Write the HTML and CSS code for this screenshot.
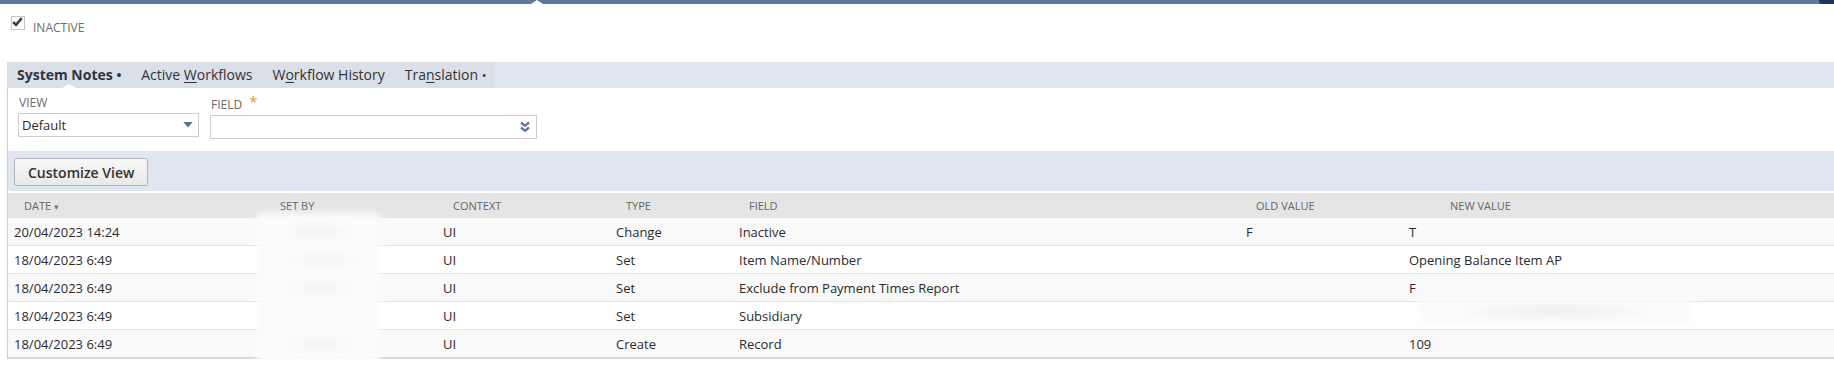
FILE: index.html
```html
<!DOCTYPE html>
<html lang="en">
<head>
  <meta charset="UTF-8">
  <title>Item - System Notes</title>
  <link rel="stylesheet" href="styles.css">
</head>
<body>

  <div class="topbar">
    <span class="notch"></span>
    <span class="corner"></span>
  </div>

  <div class="inactive-field">
    <span class="checkbox">
      <svg viewBox="0 0 14 14" width="14" height="14"><path d="M2.3 7 L5.4 10.1 L11.6 2.8" stroke="#3f3f3f" stroke-width="2.7" fill="none"/></svg>
    </span>
    <span class="check-label">INACTIVE</span>
  </div>

  <div class="subtabs">
    <div class="tabbar">
      <ul class="tabs">
        <li class="active">System Notes <span class="dot">•</span></li>
        <li>Active <u>W</u>orkflows</li>
        <li>W<u>o</u>rkflow History</li>
        <li>Tra<u>n</u>slation <span class="dot">•</span></li>
      </ul>
    </div>

    <div class="panel">
      <div class="filters">
        <div class="filter">
          <label>VIEW</label>
          <div class="select view-select">
            <span>Default</span>
            <svg viewBox="0 0 11 7" width="11" height="7"><path d="M0 0 H11 L5.5 6.5 Z" fill="#5b7196"/></svg>
          </div>
        </div>
        <div class="filter">
          <label>FIELD <span class="req">*</span></label>
          <div class="select field-select">
            <span></span>
            <svg viewBox="0 0 12 12" width="12" height="12"><path d="M2 1.5 L6 4.8 L10 1.5 M2 6.5 L6 9.8 L10 6.5" stroke="#5f7599" stroke-width="2.3" fill="none"/></svg>
          </div>
        </div>
      </div>

      <div class="toolbar">
        <button class="btn">Customize View</button>
      </div>

      <table class="notes">
        <colgroup>
          <col style="width:256px">
          <col style="width:173px">
          <col style="width:173px">
          <col style="width:123px">
          <col style="width:507px">
          <col style="width:163px">
          <col>
        </colgroup>
        <thead>
          <tr>
            <th>DATE <span class="sort">▾</span></th>
            <th>SET BY</th>
            <th>CONTEXT</th>
            <th>TYPE</th>
            <th>FIELD</th>
            <th>OLD VALUE</th>
            <th class="new-head">NEW VALUE</th>
          </tr>
        </thead>
        <tbody>
          <tr>
            <td>20/04/2023 14:24</td><td></td><td>UI</td><td>Change</td><td>Inactive</td><td>F</td><td>T</td>
          </tr>
          <tr>
            <td>18/04/2023 6:49</td><td></td><td>UI</td><td>Set</td><td>Item Name/Number</td><td></td><td>Opening Balance Item AP</td>
          </tr>
          <tr>
            <td>18/04/2023 6:49</td><td></td><td>UI</td><td>Set</td><td>Exclude from Payment Times Report</td><td></td><td>F</td>
          </tr>
          <tr>
            <td>18/04/2023 6:49</td><td></td><td>UI</td><td>Set</td><td>Subsidiary</td><td></td><td></td>
          </tr>
          <tr>
            <td>18/04/2023 6:49</td><td></td><td>UI</td><td>Create</td><td>Record</td><td></td><td>109</td>
          </tr>
        </tbody>
      </table>

      <div class="blur blur-setby"></div>
      <div class="blur blur-value"></div>
    </div>
  </div>

</body>
</html>
```

FILE: styles.css
```css
body {
  margin: 0;
  font-family: "Open Sans", Arial, sans-serif;
  color: #2b2b2b;
  background-color: #fff;
  overflow: hidden;
}

.topbar {
  position: relative;
  height: 4px;
  background-color: #607799;
}

.notch {
  position: absolute;
  left: 531px;
  bottom: 0;
  width: 0;
  height: 0;
  border-left: 6px solid transparent;
  border-right: 6px solid transparent;
  border-bottom: 4px solid #fff;
}

.corner {
  position: absolute;
  right: 0;
  top: 0;
  width: 15px;
  height: 4px;
  background-color: #22365a;
  border-bottom-left-radius: 3px;
}

.inactive-field {
  display: flex;
  align-items: flex-start;
  gap: 8px;
  padding: 10px 0 0 11px;
}

.checkbox {
  display: flex;
  width: 14px;
  height: 14px;
  margin-top: 2px;
  border: 1px solid #c4c4c4;
  box-sizing: border-box;
  overflow: visible;
}

.checkbox svg {
  margin: -2px 0 0 -1px;
}

.check-label {
  font-size: 12px;
  color: #6b6b6b;
  line-height: 16px;
  padding-top: 6px;
}

.subtabs {
  margin: 26px 0 0 7px;
}

.tabbar {
  height: 26px;
  background-color: #dfe6ef;
}

.tabs {
  display: flex;
  list-style: none;
  margin: 0;
  padding: 0;
  width: max-content;
  background-color: #dbe0e8;
}

.tabs li {
  position: relative;
  padding: 0 10px 0 10px;
  line-height: 26px;
  font-size: 14px;
  color: #333;
}

.tabs li:last-child {
  padding-right: 8px;
}

.tabs li.active {
  font-weight: 700;
  color: #2f3540;
}

.tabs li.active::after {
  content: "";
  position: absolute;
  left: 50%;
  bottom: 0;
  margin-left: -7px;
  border-left: 7px solid transparent;
  border-right: 7px solid transparent;
  border-bottom: 4px solid #fff;
}

.tabs u {
  text-underline-offset: 2px;
}

.dot {
  font-size: 13px;
}

.panel {
  position: relative;
  border-left: 1px solid #cfcfcf;
}

.filters {
  display: flex;
  gap: 11px;
  padding: 7px 0 12px 10px;
}

.filter label {
  display: block;
  font-size: 12px;
  line-height: 16px;
  color: #6b6b6b;
  padding-left: 1px;
  margin-bottom: 2px;
}

.req {
  color: #e8951c;
  font-size: 15px;
  margin-left: 4px;
  position: relative;
  top: -2px;
}

.select {
  display: flex;
  align-items: center;
  justify-content: space-between;
  height: 24px;
  box-sizing: border-box;
  border: 1px solid #cccccc;
  padding: 0 5px 0 3px;
  font-size: 13px;
  color: #2b2b2b;
}

.view-select {
  width: 181px;
}

.view-select svg {
  width: 10px;
  height: 6px;
}

.field-select {
  width: 327px;
}

.toolbar {
  height: 40px;
  box-sizing: border-box;
  padding: 7px 0 0 6px;
  background-color: #dfe6ef;
}

.btn {
  height: 28px;
  padding: 0 13px;
  font-family: "Open Sans", Arial, sans-serif;
  font-size: 14px;
  font-weight: 600;
  color: #333;
  background: linear-gradient(#f7f7f7, #e9e9e9);
  border: 1px solid #b4b4b4;
  border-radius: 3px;
}

.notes {
  width: 100%;
  margin-top: 2px;
  border-collapse: collapse;
  table-layout: fixed;
  border-bottom: 2px solid #dadada;
}

.notes th {
  height: 24px;
  padding: 0 0 0 16px;
  background-color: #e5e5e5;
  font-size: 11px;
  font-weight: 400;
  color: #666;
  text-align: left;
}

.notes th.new-head {
  padding-left: 47px;
}

.sort {
  font-size: 9px;
  color: #777;
}

.notes td {
  height: 27px;
  padding: 0 6px;
  font-size: 13px;
  border-top: 1px solid #e4e4e4;
  white-space: nowrap;
}

.notes tbody tr:nth-child(odd) {
  background-color: #f9f9f9;
}

.blur {
  position: absolute;
  filter: blur(3px);
}

.blur-setby {
  left: 249px;
  top: 125px;
  width: 123px;
  height: 150px;
  background:
    radial-gradient(ellipse 40px 10px at 50% 19px, rgba(0,0,0,0.04), rgba(0,0,0,0)),
    radial-gradient(ellipse 40px 10px at 55% 47px, rgba(0,0,0,0.03), rgba(0,0,0,0)),
    radial-gradient(ellipse 40px 10px at 50% 75px, rgba(0,0,0,0.03), rgba(0,0,0,0)),
    radial-gradient(ellipse 40px 10px at 50% 131px, rgba(0,0,0,0.03), rgba(0,0,0,0)),
    #fbfbfb;
}

.blur-value {
  left: 1410px;
  top: 212px;
  width: 274px;
  height: 23px;
  background:
    radial-gradient(ellipse 110px 9px at 50% 50%, rgba(0,0,0,0.06), rgba(0,0,0,0)),
    #fbfbfb;
}
```
